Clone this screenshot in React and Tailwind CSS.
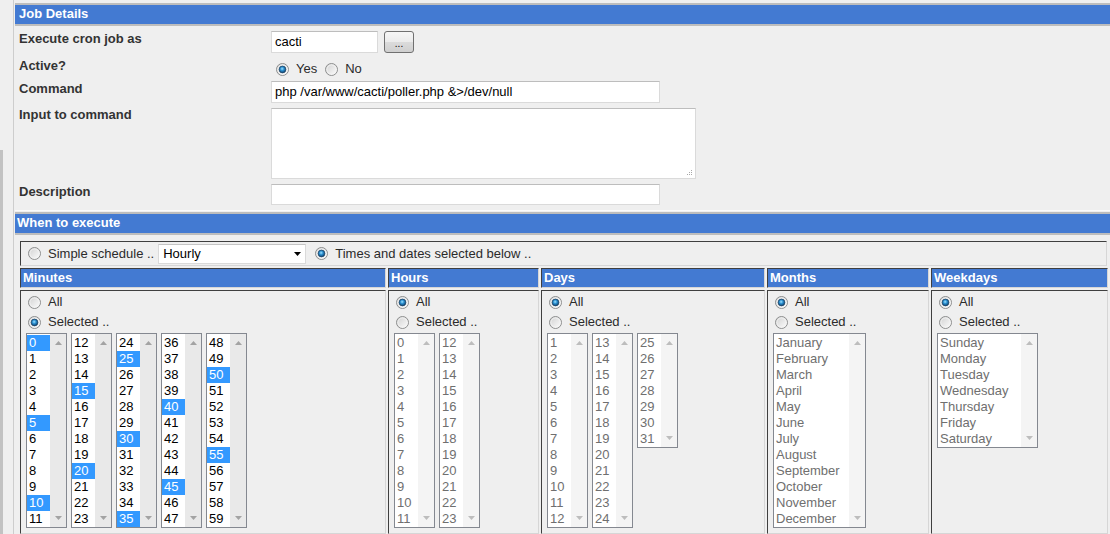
import { useId } from 'react';

const range = (from, to) => Array.from({ length: to - from + 1 }, (_, i) => from + i);

const MONTHS = ['January', 'February', 'March', 'April', 'May', 'June', 'July', 'August', 'September', 'October', 'November', 'December'];
const WEEKDAYS = ['Sunday', 'Monday', 'Tuesday', 'Wednesday', 'Thursday', 'Friday', 'Saturday'];
const PICKED_MINUTES = [0, 5, 10, 15, 20, 25, 30, 35, 40, 45, 50, 55];

// Win7-ish radio, drawn so every machine renders it the same
function Radio({ checked }) {
  const id = useId().replace(/:/g, '');
  return (
    <svg width="13" height="13" viewBox="0 0 13 13" className="shrink-0">
      <defs>
        <linearGradient id={`bg${id}`} x1="0" y1="0" x2="1" y2="1">
          <stop offset="0" stopColor="#cfcfcf" />
          <stop offset="1" stopColor="#ffffff" />
        </linearGradient>
        <radialGradient id={`dot${id}`} cx="45%" cy="40%" r="60%">
          <stop offset="0" stopColor="#9fe2ff" />
          <stop offset="0.45" stopColor="#2a8fd0" />
          <stop offset="1" stopColor="#0f3f6a" />
        </radialGradient>
      </defs>
      <circle cx="6.5" cy="6.5" r="6" fill={`url(#bg${id})`} stroke="#8d8e8e" strokeWidth="1" />
      <circle cx="6.5" cy="6.5" r="4.6" fill="none" stroke="#f4f4f4" strokeWidth="0.8" />
      {checked && <circle cx="6.5" cy="6.5" r="3.4" fill={`url(#dot${id})`} stroke="#1d4466" strokeWidth="0.7" />}
    </svg>
  );
}

function Arrow({ down, color }) {
  return (
    <svg width="7" height="4" viewBox="0 0 7 4">
      <path d={down ? 'M0 0h7L3.5 4z' : 'M0 4h7L3.5 0z'} fill={color} />
    </svg>
  );
}

function ListBox({ items, selected = [], disabled, width, height }) {
  return (
    <div className={`flex border border-[#848890] bg-white ${width} ${height}`}>
      <div className="flex-1 py-[1px]">
        {items.map((item) => {
          const on = selected.includes(item);
          return (
            <div
              key={item}
              className={`h-[16px] pl-[2px] leading-[16px] whitespace-nowrap ${
                on ? 'bg-[#3399ff] text-white' : disabled ? 'text-[#6f6f6f]' : 'text-black'
              }`}
            >
              {item}
            </div>
          );
        })}
      </div>
      <div
        className={`flex w-[16px] flex-col items-center justify-between py-[7px] ${
          disabled ? 'bg-[#f4f4f4]' : 'bg-[#e9e9e9]'
        }`}
      >
        <Arrow color={disabled ? '#bdbdbd' : '#a3a3a3'} />
        <Arrow down color={disabled ? '#bdbdbd' : '#a3a3a3'} />
      </div>
    </div>
  );
}

const inset = 'border border-t-[#3f3f3f] border-l-[#3f3f3f] border-b-[#d6d6d6] border-r-[#d6d6d6]';

function Choice({ allChecked }) {
  return (
    <div className="pl-[2px] pt-[1px] text-[#2b2b2b]">
      <div className="flex h-[20px] items-center gap-[7px]">
        <Radio checked={allChecked} />
        <span>All</span>
      </div>
      <div className="flex h-[20px] items-center gap-[7px]">
        <Radio checked={!allChecked} />
        <span>Selected ..</span>
      </div>
    </div>
  );
}

function Field({ className }) {
  return <div className={`border border-[#dadada] border-t-[#bdbdbd] bg-white ${className}`} />;
}

function SectionBar({ title, className }) {
  return (
    <div className={`h-[23px] border-y-2 border-[#bdbdbd] bg-[#437ad2] font-bold leading-[18px] text-white ${className}`}>
      {title}
    </div>
  );
}

export default function App() {
  return (
    <div className="flex h-[534px] w-[1110px] overflow-hidden bg-[#efefef] font-['Liberation_Sans',Arial,sans-serif] text-[13px] text-[#2b2b2b]">
      <div className="w-[13px] shrink-0">
        <div className="mt-[150px] h-full w-[3px] bg-[#c2c2c2]" />
      </div>

      <div className="flex-1 border-l border-[#cdcdcd] pl-[1px] pt-[3px]">
        <SectionBar title="Job Details" className="pl-[4px]" />

        {/* Job detail rows */}
        <div className="pt-[2px]">
          <div className="flex h-[28px]">
            <div className="w-[256px] pl-[4px] pt-[3px] font-bold leading-[16px] text-[#333]">Execute cron job as</div>
            <div className="mt-[3px] flex gap-[6px]">
              <div className="flex h-[22px] w-[107px] items-center border border-[#dadada] border-t-[#bdbdbd] bg-white pl-[3px] text-black">
                cacti
              </div>
              <div className="flex h-[22px] w-[30px] items-end justify-center rounded-[3px] border border-[#707070] bg-[linear-gradient(#f6f6f6_0%,#ebebeb_50%,#dbdbdb_51%,#cfcfcf_100%)] pb-[3px] text-[10px] leading-[10px] text-black">
                ...
              </div>
            </div>
          </div>

          <div className="flex h-[23px]">
            <div className="w-[256px] pl-[4px] pt-[2px] font-bold leading-[16px] text-[#333]">Active?</div>
            <div className="mt-[6px] flex h-[14px] items-center pl-[5px]">
              <Radio checked />
              <span className="ml-[7px]">Yes</span>
              <span className="ml-[8px]"><Radio /></span>
              <span className="ml-[7px]">No</span>
            </div>
          </div>

          <div className="flex h-[27px]">
            <div className="w-[256px] pl-[4px] pt-[2px] font-bold leading-[16px] text-[#333]">Command</div>
            <div className="mt-[2px] flex h-[22px] w-[389px] items-center border border-[#dadada] border-t-[#bdbdbd] bg-white pl-[3px] text-black">
              php /var/www/cacti/poller.php &amp;&gt;/dev/null
            </div>
          </div>

          <div className="flex h-[76px]">
            <div className="w-[256px] pl-[4px] pt-[1px] font-bold leading-[16px] text-[#333]">Input to command</div>
            <div className="mt-[2px] flex h-[71px] w-[425px] items-end justify-end border border-[#dadada] border-t-[#bdbdbd] bg-white p-[2px]">
              <svg width="7" height="7" viewBox="0 0 7 7">
                <g fill="#a8a8a8">
                  <rect x="5" y="1" width="1" height="1" />
                  <rect x="3" y="3" width="1" height="1" />
                  <rect x="5" y="3" width="1" height="1" />
                  <rect x="1" y="5" width="1" height="1" />
                  <rect x="3" y="5" width="1" height="1" />
                  <rect x="5" y="5" width="1" height="1" />
                </g>
              </svg>
            </div>
          </div>

          <div className="flex h-[26px]">
            <div className="w-[256px] pl-[4px] pt-[2px] font-bold leading-[16px] text-[#333]">Description</div>
            <Field className="mt-[2px] h-[21px] w-[389px]" />
          </div>
        </div>

        <div className="mt-[2px] h-[1px] bg-[#fbfbfb]" />
        <SectionBar title="When to execute" className="mt-[1px] pl-[2px]" />

        {/* Schedule table */}
        <div className="pl-[5px] pt-[6px]">
          <div className={`flex h-[25px] w-[1087px] items-center pl-[7px] ${inset}`}>
            <Radio />
            <span className="ml-[7px]">Simple schedule ..</span>
            <div className="ml-[4px] flex h-[20px] w-[148px] items-center justify-between border border-[#dadada] border-t-[#c4c4c4] bg-white pl-[4px] pr-[4px] text-black">
              <span>Hourly</span>
              <Arrow down color="#000" />
            </div>
            <span className="ml-[9px]"><Radio checked /></span>
            <span className="ml-[7px]">Times and dates selected below ..</span>
          </div>

          <div className="mt-[2px] grid grid-cols-[366px_151px_224px_162px_177px] gap-x-[2px] gap-y-[2px]">
            {['Minutes', 'Hours', 'Days', 'Months', 'Weekdays'].map((title) => (
              <div key={title} className={`h-[20px] bg-[#437ad2] pl-[2px] font-bold leading-[17px] text-white ${inset}`}>
                {title}
              </div>
            ))}

            <div className={`h-[244px] pl-[5px] ${inset}`}>
              <Choice allChecked={false} />
              <div className="mt-[1px] flex gap-[4px]">
                {[0, 12, 24, 36, 48].map((start) => (
                  <ListBox key={start} items={range(start, start + 11)} selected={PICKED_MINUTES} width="w-[41px]" height="h-[195px]" />
                ))}
              </div>
            </div>

            <div className={`h-[244px] pl-[5px] ${inset}`}>
              <Choice allChecked />
              <div className="mt-[1px] flex gap-[4px]">
                <ListBox items={range(0, 11)} disabled width="w-[41px]" height="h-[195px]" />
                <ListBox items={range(12, 23)} disabled width="w-[41px]" height="h-[195px]" />
              </div>
            </div>

            <div className={`h-[244px] pl-[5px] ${inset}`}>
              <Choice allChecked />
              <div className="mt-[1px] flex items-start gap-[4px]">
                <ListBox items={range(1, 12)} disabled width="w-[41px]" height="h-[195px]" />
                <ListBox items={range(13, 24)} disabled width="w-[41px]" height="h-[195px]" />
                <ListBox items={range(25, 31)} disabled width="w-[41px]" height="h-[115px]" />
              </div>
            </div>

            <div className={`h-[244px] pl-[5px] ${inset}`}>
              <Choice allChecked />
              <div className="mt-[1px] flex">
                <ListBox items={MONTHS} disabled width="w-[93px]" height="h-[195px]" />
              </div>
            </div>

            <div className={`h-[244px] pl-[5px] ${inset}`}>
              <Choice allChecked />
              <div className="mt-[1px] flex">
                <ListBox items={WEEKDAYS} disabled width="w-[101px]" height="h-[115px]" />
              </div>
            </div>
          </div>
        </div>
      </div>
    </div>
  );
}
